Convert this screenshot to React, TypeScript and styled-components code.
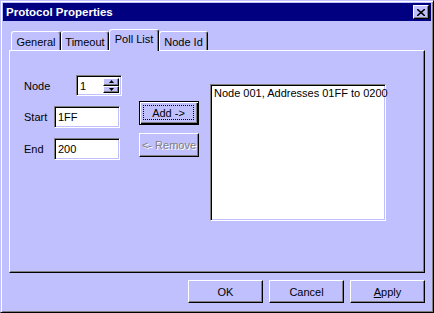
import React from "react";
import styled, { createGlobalStyle, css } from "styled-components";

const FACE = "#c0c0ff";
const SHADOW = "#808080";

const GlobalStyle = createGlobalStyle`
  html, body { margin: 0; padding: 0; background: ${FACE}; }
  body { font-family: "Liberation Sans", Arial, sans-serif; font-size: 11px; color: #000; }
  * { box-sizing: border-box; }
`;

const Window = styled.div`
  width: 434px;
  height: 313px;
  background: ${FACE};
  border: 1px solid;
  border-color: ${FACE} #000 #000 ${FACE};
  box-shadow: inset 1px 1px #fff, inset -1px -1px ${SHADOW};
  padding: 2px;
  display: flex;
  flex-direction: column;
`;

const TitleBar = styled.div`
  height: 18px;
  background: #000080;
  color: #fff;
  font-weight: bold;
  font-size: 11.5px;
  display: flex;
  align-items: center;
  justify-content: space-between;
  padding: 0 2px 0 3px;
`;

const CloseButton = styled.button`
  width: 16px;
  height: 14px;
  padding: 0;
  background: ${FACE};
  border: 1px solid;
  border-color: #fff #000 #000 #fff;
  box-shadow: inset -1px -1px ${SHADOW};
  display: flex;
  align-items: center;
  justify-content: center;
`;

const Body = styled.div`
  padding: 0 6px;
  display: flex;
  flex-direction: column;
`;

const TabRow = styled.div`
  margin-top: 8px;
  height: 21px;
  padding-left: 2px;
  display: flex;
  align-items: flex-end;
`;

const Tab = styled.div<{ $w: number; $active?: boolean }>`
  width: ${(p) => p.$w}px;
  height: 19px;
  background: ${FACE};
  border-top: 1px solid #fff;
  border-left: 1px solid #fff;
  border-right: 1px solid #000;
  border-radius: 3px 3px 0 0;
  box-shadow: inset -1px 0 ${SHADOW};
  display: flex;
  align-items: center;
  justify-content: center;
  padding-top: 1px;
  ${(p) =>
    p.$active &&
    css`
      height: 22px;
      margin-bottom: -1px;
      position: relative;
      z-index: 1;
      padding-top: 0;
      padding-bottom: 3px;
    `}
`;

const Panel = styled.div`
  height: 223px;
  border: 1px solid;
  border-color: #fff #000 #000 #fff;
  box-shadow: inset -1px -1px ${SHADOW};
  display: flex;
  align-items: flex-start;
  padding-left: 14px;
`;

const Form = styled.div`
  margin-top: 24px;
  width: 98px;
  display: flex;
  flex-direction: column;
  gap: 10px;
`;

const Row = styled.div`
  display: flex;
  align-items: center;
`;

const Label = styled.span`
  width: 30px;
`;

const sunken = css`
  border: 1px solid;
  border-color: ${SHADOW} #fff #fff ${SHADOW};
  box-shadow: inset 1px 1px #000, inset -1px -1px ${FACE};
`;

const TextField = styled.div`
  ${sunken};
  width: 66px;
  height: 22px;
  background: #fff;
  padding: 2px 3px;
  display: flex;
  align-items: center;
`;

const SpinBox = styled.div`
  ${sunken};
  margin-left: 22px;
  width: 46px;
  height: 21px;
  background: #fff;
  padding: 2px;
  display: flex;
`;

const SpinText = styled.span`
  flex: 1;
  padding-left: 1px;
  display: flex;
  align-items: center;
`;

const SpinArrows = styled.div`
  width: 16px;
  display: flex;
  flex-direction: column;
`;

const SpinArrow = styled.div`
  flex: 1;
  background: ${FACE};
  border: 1px solid;
  border-color: #fff #000 #000 #fff;
  box-shadow: inset -1px -1px ${SHADOW};
  display: flex;
  align-items: center;
  justify-content: center;
`;

const ButtonColumn = styled.div`
  margin-top: 50px;
  margin-left: 17px;
  display: flex;
  flex-direction: column;
  gap: 8px;
`;

const PushButton = styled.button<{ $w: number; $h: number; $default?: boolean; $disabled?: boolean }>`
  width: ${(p) => p.$w}px;
  height: ${(p) => p.$h}px;
  background: ${FACE};
  font: inherit;
  color: #000;
  padding: 0;
  border: 1px solid;
  border-color: #fff #000 #000 #fff;
  box-shadow: inset -1px -1px ${SHADOW};
  display: flex;
  align-items: center;
  justify-content: center;
  ${(p) =>
    p.$default &&
    css`
      border-color: #000;
      box-shadow: inset 1px 1px #fff, inset -1px -1px #000, inset -2px -2px ${SHADOW};
      padding: 3px 4px 4px 3px;
    `}
  ${(p) =>
    p.$disabled &&
    css`
      color: ${SHADOW};
      text-shadow: 1px 1px #fff;
    `}
`;

const FocusRect = styled.span`
  flex: 1;
  align-self: stretch;
  border: 1px dotted #000;
  display: flex;
  align-items: center;
  justify-content: center;
`;

const ListBox = styled.div`
  ${sunken};
  margin-top: 33px;
  margin-left: 11px;
  width: 176px;
  height: 137px;
  background: #fff;
  padding: 2px 3px;
  white-space: nowrap;
  line-height: 13px;
`;

const Footer = styled.div`
  margin-top: 7px;
  display: flex;
  justify-content: flex-end;
  gap: 6px;
`;

const Mnemonic = styled.span`
  text-decoration: underline;
`;

const Triangle = ({ up }: { up?: boolean }) => (
  <svg width="5" height="3" viewBox="0 0 5 3">
    <path d={up ? "M2.5 0 L5 3 L0 3 Z" : "M0 0 L5 0 L2.5 3 Z"} fill="#000" />
  </svg>
);

export default function App() {
  return (
    <>
      <GlobalStyle />
      <Window>
        <TitleBar>
          <span>Protocol Properties</span>
          <CloseButton aria-label="Close">
            <svg width="8" height="7" viewBox="0 0 8 7">
              <path d="M0 0 L8 7 M8 0 L0 7" stroke="#000" strokeWidth="1.6" />
            </svg>
          </CloseButton>
        </TitleBar>
        <Body>
          <TabRow>
            <Tab $w={50}>General</Tab>
            <Tab $w={48}>Timeout</Tab>
            <Tab $w={50} $active>Poll List</Tab>
            <Tab $w={49}>Node Id</Tab>
          </TabRow>
          <Panel>
            <Form>
              <Row>
                <Label>Node</Label>
                <SpinBox>
                  <SpinText>1</SpinText>
                  <SpinArrows>
                    <SpinArrow>
                      <Triangle up />
                    </SpinArrow>
                    <SpinArrow>
                      <Triangle />
                    </SpinArrow>
                  </SpinArrows>
                </SpinBox>
              </Row>
              <Row>
                <Label>Start</Label>
                <TextField>1FF</TextField>
              </Row>
              <Row>
                <Label>End</Label>
                <TextField>200</TextField>
              </Row>
            </Form>
            <ButtonColumn>
              <PushButton $w={60} $h={24} $default>
                <FocusRect>Add -&gt;</FocusRect>
              </PushButton>
              <PushButton $w={60} $h={24} $disabled>
                &lt;- Remove
              </PushButton>
            </ButtonColumn>
            <ListBox>Node 001, Addresses 01FF to 0200</ListBox>
          </Panel>
          <Footer>
            <PushButton $w={75} $h={23}>OK</PushButton>
            <PushButton $w={75} $h={23}>Cancel</PushButton>
            <PushButton $w={75} $h={23}>
              <span>
                <Mnemonic>A</Mnemonic>pply
              </span>
            </PushButton>
          </Footer>
        </Body>
      </Window>
    </>
  );
}
